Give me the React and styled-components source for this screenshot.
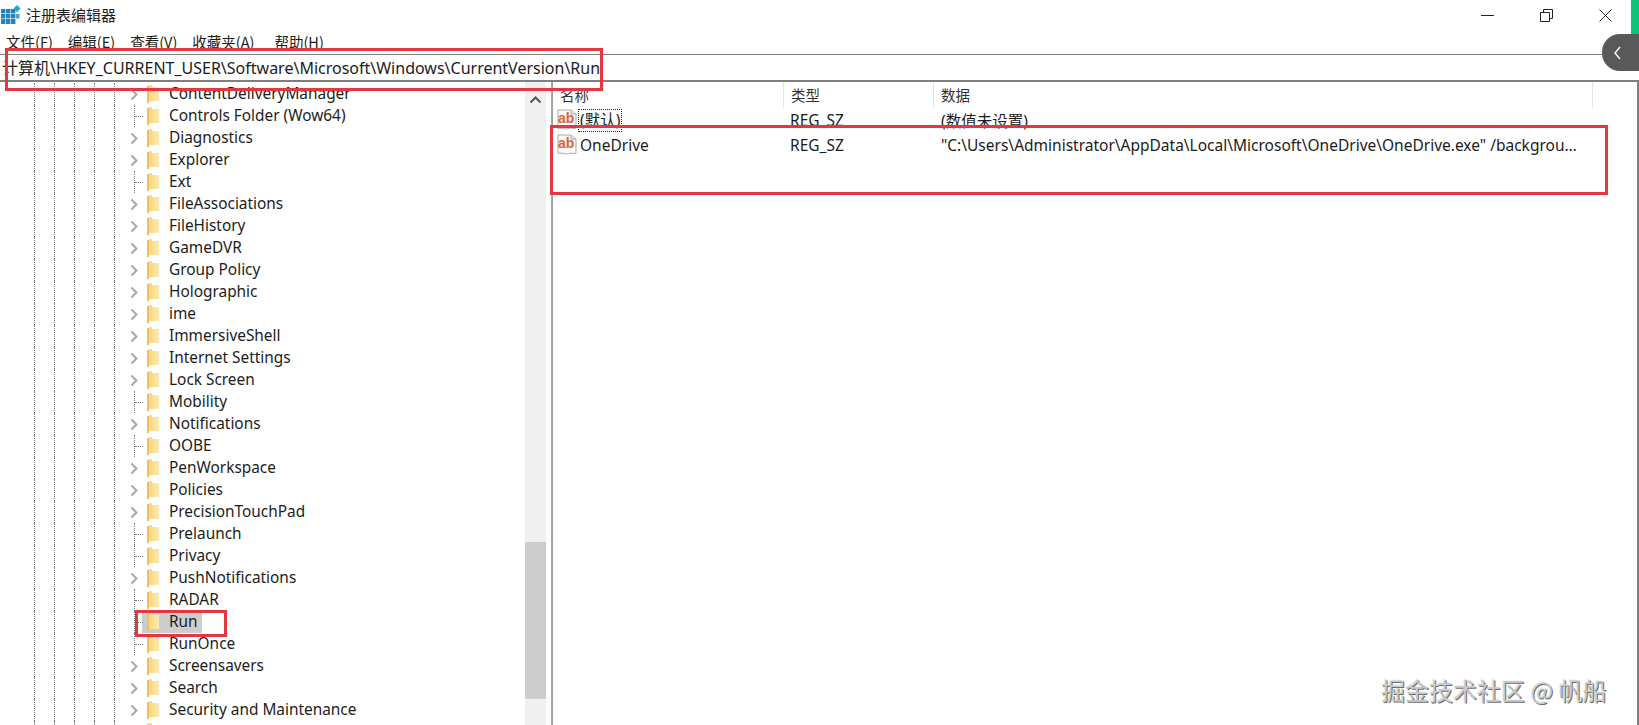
import React from 'react'
import styled, { createGlobalStyle } from 'styled-components'

const GlobalStyle = createGlobalStyle`
  html, body { margin: 0; padding: 0; background: #fff; overflow: hidden; }
  * { box-sizing: border-box; }
`

const FONT = `"Noto Sans", "Noto Sans CJK SC", sans-serif`

const Win = styled.div`
  position: relative;
  width: 1639px;
  height: 725px;
  overflow: hidden;
  background: #fff;
  color: #1c1c1c;
  font-family: ${FONT};
  display: flex;
  flex-direction: column;
`

const TitleBar = styled.div`
  height: 30px;
  display: flex;
  align-items: center;
  padding-left: 1px;
  font-size: 15px;
  flex: none;
`
const TitleText = styled.span`
  margin-left: 5px;
  margin-bottom: 2px;
  font-family: "Noto Sans CJK SC", sans-serif;
`
const WinButtons = styled.div`
  margin-left: auto;
  margin-right: 27px;
  display: flex;
  align-items: center;
  gap: 46px;
`

const MenuBar = styled.div`
  height: 24px;
  flex: none;
  display: flex;
  align-items: center;
  padding-left: 6px;
  font-size: 14.5px;
  gap: 15px;
`
const MenuItem = styled.span`
  font-family: "Noto Sans CJK SC", sans-serif;
  white-space: nowrap;
  line-height: 22px;
  &:last-child {
    margin-left: 5px;
  }
`

const AddressBar = styled.div`
  height: 28px;
  flex: none;
  border-top: 1px solid #7f7f7f;
  border-bottom: 2px solid #7f7f7f;
  font-size: 16px;
  line-height: 26px;
  white-space: nowrap;
  overflow: hidden;
  padding-left: 2px;
`

const Split = styled.div`
  flex: 1;
  min-height: 0;
  display: flex;
  border-right: 2px solid #808080;
`

const TreePane = styled.div`
  width: 552px;
  flex: none;
  display: flex;
  border-right: 1px solid #a8a8a8;
`
const TreeList = styled.div`
  width: 525px;
  flex: none;
  padding-top: 1px;
  overflow: hidden;
`
const TreeRow = styled.div`
  height: 22px;
  display: flex;
  align-items: stretch;
  padding-left: 34px;
  font-size: 15.4px;
`
const Guide = styled.span`
  width: 20px;
  flex: none;
  border-left: 1px dotted #777;
`
const Branch = styled.span`
  position: relative;
  width: 13px;
  flex: none;
  border-left: 1px dotted #777;
  display: flex;
  align-items: center;
  ${p => p.$leaf && `
    &::after {
      content: "";
      width: 8px;
      border-top: 1px dotted #777;
    }
  `}
  svg {
    margin-left: -6px;
    background: #fff;
    flex: none;
  }
`
const FolderWrap = styled.span`
  width: 20px;
  flex: none;
  display: flex;
  align-items: center;
`
const RowLabel = styled.span`
  line-height: 22px;
  padding: 0 1px;
  white-space: nowrap;
  margin-left: 1px;
`
const Selected = styled.span`
  display: flex;
  align-items: center;
  background: ${p => (p.$on ? '#cdcdcd' : 'transparent')};
  margin-left: ${p => (p.$on ? '-5px' : '0')};
  padding-left: ${p => (p.$on ? '5px' : '0')};
  padding-right: ${p => (p.$on ? '3px' : '0')};
`

const ScrollTrack = styled.div`
  width: 21px;
  flex: none;
  background: #f0f0f0;
  display: flex;
  flex-direction: column;
  align-items: center;
  margin-right: 1px;
`
const ScrollArrow = styled.div`
  height: 21px;
  padding-top: 5px;
  flex: none;
`
const ScrollThumb = styled.div`
  margin-top: 439px;
  width: 100%;
  height: 157px;
  background: #cdcdcd;
`

const ListPane = styled.div`
  flex: 1;
  min-width: 0;
  border-left: 1px solid #a0a0a0;
`
const Columns = styled.div`
  display: grid;
  grid-template-columns: 231px 150px 659px;
`
const HeaderRow = styled(Columns)`
  height: 26px;
  font-size: 14.5px;
`
const HeaderCell = styled.div`
  font-family: "Noto Sans CJK SC", sans-serif;
  border-right: 1px solid #e5e5e5;
  padding-left: 7px;
  line-height: 26px;
  color: #333;
`
const ValueRow = styled(Columns)`
  height: 24px;
  font-size: 15.5px;
  align-items: center;
  & + & {
    margin-top: 1px;
  }
`
const NameCell = styled.div`
  display: flex;
  align-items: center;
  padding-left: 4px;
  gap: 1px;
`
const NameText = styled.span`
  line-height: 21px;
  padding: 0 1px;
  border: 1px dotted ${p => (p.$focus ? '#222' : 'transparent')};
`
const TypeCell = styled.div`
  padding-left: 6px;
`
const DataCell = styled.div`
  padding: 0 10px 0 7px;
  white-space: nowrap;
  overflow: hidden;
  text-overflow: ellipsis;
`

const RedBox = styled.div`
  position: absolute;
  left: ${p => p.$x}px;
  top: ${p => p.$y}px;
  width: ${p => p.$w}px;
  height: ${p => p.$h}px;
  border: 3px solid #e5383e;
  pointer-events: none;
`
const GreenTab = styled.div`
  position: absolute;
  right: 0;
  top: 0;
  width: 8px;
  height: 34px;
  background: #10c47c;
`
const SidePill = styled.div`
  position: absolute;
  right: 0;
  top: 34px;
  width: 37px;
  height: 37px;
  background: #595959;
  border-radius: 18px 0 0 18px;
  display: flex;
  align-items: center;
  padding-left: 11px;
`
const Watermark = styled.div`
  position: absolute;
  left: 1381px;
  top: 672px;
  font-family: "Noto Sans CJK SC", sans-serif;
  font-size: 24px;
  line-height: 36px;
  color: #c9c9c9;
  text-shadow: 1px 1px 0 #6e6e6e, -1px -1px 0 #f4f4f4;
  white-space: nowrap;
`

const AppIcon = () => (
  <svg width="20" height="20" viewBox="0 0 20 20">
    <g fill="#1f86bd">
      <rect x="0" y="4" width="4.4" height="4.4" />
      <rect x="5" y="4" width="4.4" height="4.4" />
      <rect x="10" y="4" width="4.4" height="4.4" />
      <rect x="0" y="9" width="4.4" height="4.4" />
      <rect x="5" y="9" width="4.4" height="4.4" />
      <rect x="10" y="9" width="4.4" height="4.4" />
      <rect x="0" y="14" width="4.4" height="5" />
      <rect x="5" y="14" width="4.4" height="5" />
      <rect x="10" y="14" width="4.4" height="5" />
    </g>
    <rect x="15" y="9" width="3.5" height="4.4" fill="#4aa6d4" />
    <path d="M16 0l3.6 3.6L16 7.2l-3.6-3.6z" fill="#2aa6c9" />
  </svg>
)

const Chevron = () => (
  <svg width="11" height="22" viewBox="0 0 11 22">
    <path d="M2.5 6.5L7.5 11.5L2.5 16.5" fill="none" stroke="#a8a8a8" strokeWidth="2" />
  </svg>
)

const Folder = () => (
  <svg width="12" height="19" viewBox="0 0 12 19">
    <defs>
      <linearGradient id="fold" x1="0" x2="1" y1="0" y2="0">
        <stop offset="0" stopColor="#f8d273" />
        <stop offset="1" stopColor="#fdeab0" />
      </linearGradient>
    </defs>
    <path d="M0 1l4-1h1v2h7v14H2l-2 3z" fill="url(#fold)" />
    <rect x="0" y="1" width="2" height="17" fill="#f0c05a" />
  </svg>
)

const RegIcon = () => (
  <svg width="20" height="22" viewBox="0 0 20 22">
    <path
      d="M1 1h13l5 4v14c-2 1.5-4-.6-6 .3s-4 1-6 .2-4-.2-6 0z"
      fill="#fafafa"
      stroke="#a9a9a9"
    />
    <path d="M14 1v4h5" fill="#e6e6e6" stroke="#a9a9a9" />
    <text
      x="1"
      y="14"
      fontFamily="'Liberation Sans', sans-serif"
      fontWeight="700"
      fontSize="14"
      fill="#e0603a"
    >
      ab
    </text>
  </svg>
)

const MENUS = ['文件(F)', '编辑(E)', '查看(V)', '收藏夹(A)', '帮助(H)']

const KEYS = [
  ['ContentDeliveryManager', 1],
  ['Controls Folder (Wow64)', 0],
  ['Diagnostics', 1],
  ['Explorer', 1],
  ['Ext', 0],
  ['FileAssociations', 1],
  ['FileHistory', 1],
  ['GameDVR', 1],
  ['Group Policy', 1],
  ['Holographic', 1],
  ['ime', 1],
  ['ImmersiveShell', 1],
  ['Internet Settings', 1],
  ['Lock Screen', 1],
  ['Mobility', 0],
  ['Notifications', 1],
  ['OOBE', 0],
  ['PenWorkspace', 1],
  ['Policies', 1],
  ['PrecisionTouchPad', 1],
  ['Prelaunch', 0],
  ['Privacy', 0],
  ['PushNotifications', 1],
  ['RADAR', 0],
  ['Run', 0],
  ['RunOnce', 0],
  ['Screensavers', 1],
  ['Search', 1],
  ['Security and Maintenance', 1],
  ['', 1],
]

export default function App() {
  return (
    <Win>
      <GlobalStyle />
      <TitleBar>
        <AppIcon />
        <TitleText>注册表编辑器</TitleText>
        <WinButtons>
          <svg width="13" height="13" viewBox="0 0 13 13">
            <path d="M0 6.5h13" stroke="#222" strokeWidth="1" />
          </svg>
          <svg width="13" height="13" viewBox="0 0 13 13">
            <path d="M.5 3.5h9v9h-9zM3.5 3V.5h9v9H10" fill="none" stroke="#222" />
          </svg>
          <svg width="13" height="13" viewBox="0 0 13 13">
            <path d="M.5.5l12 12M12.5.5l-12 12" fill="none" stroke="#222" />
          </svg>
        </WinButtons>
      </TitleBar>
      <MenuBar>
        {MENUS.map(m => (
          <MenuItem key={m}>{m}</MenuItem>
        ))}
      </MenuBar>
      <AddressBar>计算机\HKEY_CURRENT_USER\Software\Microsoft\Windows\CurrentVersion\Run</AddressBar>
      <Split>
        <TreePane>
          <TreeList>
            {KEYS.map(([name, kids], i) => (
              <TreeRow key={i}>
                <Guide />
                <Guide />
                <Guide />
                <Guide />
                <Guide />
                <Branch $leaf={!kids}>{kids ? <Chevron /> : null}</Branch>
                <Selected $on={name === 'Run'}>
                  <FolderWrap>
                    <Folder />
                  </FolderWrap>
                  <RowLabel>{name}</RowLabel>
                </Selected>
              </TreeRow>
            ))}
          </TreeList>
          <ScrollTrack>
            <ScrollArrow>
              <svg width="13" height="8" viewBox="0 0 13 8">
                <path d="M1.5 6.5l5-5 5 5" fill="none" stroke="#555" strokeWidth="2" />
              </svg>
            </ScrollArrow>
            <ScrollThumb />
          </ScrollTrack>
        </TreePane>
        <ListPane>
          <HeaderRow>
            <HeaderCell>名称</HeaderCell>
            <HeaderCell>类型</HeaderCell>
            <HeaderCell>数据</HeaderCell>
          </HeaderRow>
          <ValueRow>
            <NameCell>
              <RegIcon />
              <NameText $focus>(默认)</NameText>
            </NameCell>
            <TypeCell>REG_SZ</TypeCell>
            <DataCell>(数值未设置)</DataCell>
          </ValueRow>
          <ValueRow>
            <NameCell>
              <RegIcon />
              <NameText>OneDrive</NameText>
            </NameCell>
            <TypeCell>REG_SZ</TypeCell>
            <DataCell>"C:\Users\Administrator\AppData\Local\Microsoft\OneDrive\OneDrive.exe" /background</DataCell>
          </ValueRow>
        </ListPane>
      </Split>
      <RedBox $x={5} $y={48} $w={598} $h={43} />
      <RedBox $x={135} $y={610} $w={92} $h={27} />
      <RedBox $x={550} $y={125} $w={1058} $h={70} />
      <GreenTab />
      <SidePill>
        <svg width="9" height="14" viewBox="0 0 9 14">
          <path d="M7 1L2 7l5 6" fill="none" stroke="#eee" strokeWidth="1.6" />
        </svg>
      </SidePill>
      <Watermark>掘金技术社区 @ 帆船</Watermark>
    </Win>
  )
}
